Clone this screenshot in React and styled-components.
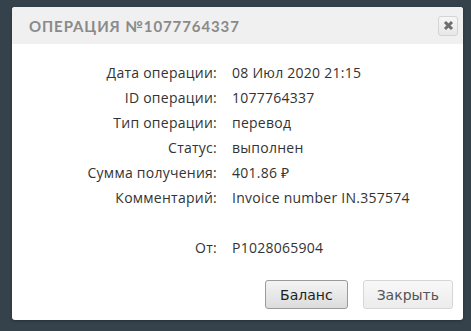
import styled, { createGlobalStyle } from 'styled-components'

const GlobalStyle = createGlobalStyle`
  html, body {
    margin: 0;
    padding: 0;
    background: #36424b;
  }
  body {
    width: 471px;
    height: 331px;
    overflow: hidden;
  }
`

const Screen = styled.div`
  padding: 7px 8px 0 12px;
`
const Dialog = styled.div`
  width: 451px;
  height: 313px;
  background: #fff;
  border-radius: 3px;
  overflow: hidden;
  display: flex;
  flex-direction: column;
  box-shadow: 0 1px 3px rgba(0, 0, 0, 0.3);
`
const Header = styled.div`
  height: 37px;
  background: #f0f0f0;
  display: flex;
  align-items: center;
  justify-content: space-between;
  padding: 0 5px 0 17px;
`
const Title = styled.h2`
  margin: 0;
  font-family: 'Lato', 'DejaVu Sans', sans-serif;
  font-weight: 700;
  font-size: 15px;
  letter-spacing: 0.9px;
  color: #8a8a8a;
  text-transform: uppercase;
`
const CloseButton = styled.button`
  width: 20px;
  height: 20px;
  padding: 0;
  border: 1px solid #d4d4d4;
  border-radius: 3px;
  background: linear-gradient(#f6f6f6, #e8e8e8);
  display: flex;
  align-items: center;
  justify-content: center;
`
const Body = styled.div`
  flex: 1;
  padding-top: 16px;
`
const Details = styled.dl`
  margin: 0;
  display: grid;
  grid-template-columns: 205px auto;
  column-gap: 15px;
  font-family: 'Open Sans', sans-serif;
  font-size: 14px;
  letter-spacing: 0.25px;
  line-height: 25px;
  color: #333;
`
const Label = styled.dt`
  text-align: right;
  grid-column: 1;
  margin-top: ${p => (p.$spaced ? '25px' : '0')};
`
const Value = styled.dd`
  margin: 0;
  grid-column: 2;
  margin-top: ${p => (p.$spaced ? '25px' : '0')};
`
const Footer = styled.div`
  display: flex;
  justify-content: flex-end;
  gap: 15px;
  padding: 0 10px 11px 0;
`
const Button = styled.button`
  height: 29px;
  padding: 0 ${p => (p.$primary ? '14px' : '13px')};
  border-radius: 3px;
  font-family: 'DejaVu Sans', sans-serif;
  font-size: 14px;
  color: ${p => (p.$primary ? '#222' : '#555')};
  border: 1px solid ${p => (p.$primary ? '#9a9a9a' : '#d6d6d6')};
  background: ${p =>
    p.$primary
      ? 'linear-gradient(#f4f4f4, #dcdcdc)'
      : 'linear-gradient(#f8f8f8, #ececec)'};
`

const rows = [
  ['Дата операции:', '08 Июл 2020 21:15'],
  ['ID операции:', '1077764337'],
  ['Тип операции:', 'перевод'],
  ['Статус:', 'выполнен'],
  ['Сумма получения:', '401.86 ₽'],
  ['Комментарий:', 'Invoice number IN.357574']
]

const CloseIcon = () => (
  <svg width="11" height="11" viewBox="0 0 11 11">
    <path d="M2 2 L9 9 M9 2 L2 9" stroke="#6e6e6e" strokeWidth="3" strokeLinecap="butt" />
  </svg>
)

export default function App() {
  return (
    <>
      <GlobalStyle />
      <Screen>
        <Dialog>
          <Header>
            <Title>Операция №1077764337</Title>
            <CloseButton aria-label="close">
              <CloseIcon />
            </CloseButton>
          </Header>
          <Body>
            <Details>
              {rows.map(([label, value]) => (
                <>
                  <Label key={label}>{label}</Label>
                  <Value key={label + 'v'}>{value}</Value>
                </>
              ))}
              <Label $spaced>От:</Label>
              <Value $spaced>P1028065904</Value>
            </Details>
          </Body>
          <Footer>
            <Button $primary>Баланс</Button>
            <Button>Закрыть</Button>
          </Footer>
        </Dialog>
      </Screen>
    </>
  )
}
